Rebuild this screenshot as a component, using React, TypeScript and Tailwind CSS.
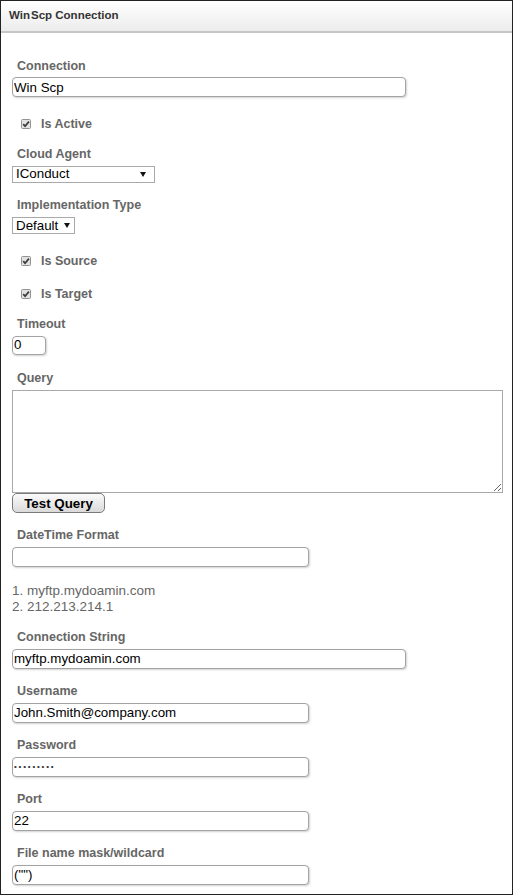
import React from "react";

function Label({ children, className = "" }: { children: React.ReactNode; className?: string }) {
  return (
    <div className={`h-[15px] leading-[15px] ml-[5px] text-[12.5px] font-bold text-[#666] ${className}`}>
      {children}
    </div>
  );
}

function TextInput({ value, width, className = "" }: { value: string; width: string; className?: string }) {
  return (
    <input
      readOnly
      defaultValue={value}
      className={`${width} h-[20px] block rounded-[4px] border border-[#a3a3a3] bg-white pl-[1px] text-[13.33px] text-black shadow-[1px_1px_2px_rgba(0,0,0,0.18)] outline-none font-['Liberation_Sans',Arial,sans-serif] ${className}`}
    />
  );
}

function Check({ label, className = "" }: { label: string; className?: string }) {
  return (
    <div className={`h-[15px] flex items-center ml-[9px] ${className}`}>
      <svg width="10" height="10" viewBox="0 0 10 10" className="shrink-0 mt-[1px]">
        <rect x="0.5" y="0.5" width="9" height="9" rx="1" fill="#e2e2e2" stroke="#939393" />
        <path d="M2.2 5.2 L4.1 7.2 L7.9 2.6" fill="none" stroke="#3a3a3a" strokeWidth="1.7" />
      </svg>
      <span className="ml-[10px] mt-[1px] text-[12.5px] font-bold text-[#666]">{label}</span>
    </div>
  );
}

function Arrow() {
  return (
    <svg width="6" height="5" viewBox="0 0 6 5" className="shrink-0">
      <polygon points="0,0 6,0 3,5" fill="#111" />
    </svg>
  );
}

export default function App() {
  return (
    <div className="w-[513px] h-[895px] border border-[#222] bg-white overflow-hidden font-['Liberation_Sans',Arial,sans-serif]">
      {/* Header */}
      <div className="h-[32px] border-b-2 border-[#c6c6c6] bg-linear-to-b from-white to-[#ececec] flex items-center pl-[8px]">
        <span className="text-[11.5px] font-bold text-[#333]">
          Win<span className="ml-[1px]">Scp</span> Connection
        </span>
      </div>

      {/* Form */}
      <div className="pl-[11px] pt-[25.5px]">
        <Label>Connection</Label>
        <TextInput value="Win Scp" width="w-[394px]" className="mt-[3.5px]" />

        <Check label="Is Active" className="mt-[19px]" />

        <Label className="mt-[15.5px]">Cloud Agent</Label>
        <div className="mt-[4px] w-[143px] h-[17px] border border-[#a9a9a9] bg-white flex items-center justify-between pl-[3px] pr-[8px]">
          <span className="text-[13.33px] text-black leading-none">IConduct</span>
          <Arrow />
        </div>

        <Label className="mt-[15.5px]">Implementation Type</Label>
        <div className="mt-[4px] w-fit h-[17px] border border-[#a9a9a9] bg-white flex items-center gap-[6px] pl-[3px] pr-[4px]">
          <span className="text-[13.33px] text-black leading-none">Default</span>
          <Arrow />
        </div>

        <Check label="Is Source" className="mt-[19px]" />
        <Check label="Is Target" className="mt-[18px]" />

        <Label className="mt-[16px]">Timeout</Label>
        <TextInput value="0" width="w-[34px]" className="mt-[3.5px] !h-[19px]" />

        <Label className="mt-[16.5px]">Query</Label>
        <textarea
          readOnly
          className="mt-[3.5px] block w-[491px] h-[103px] border border-[#a9a9a9] bg-white outline-none resize"
        />
        <button className="block w-[93px] h-[20px] rounded-[5px] border border-[#7a7a7a] bg-linear-to-b from-[#fbfbfb] to-[#dadada] text-[13.33px] font-bold text-black font-['Liberation_Sans',Arial,sans-serif]">
          Test Query
        </button>

        <Label className="mt-[15.5px]">DateTime Format</Label>
        <TextInput value="" width="w-[297px]" className="mt-[3.5px]" />

        <div className="mt-[16.5px] text-[13.5px] leading-[16px] text-[#666]">
          <div>1. myftp.mydoamin.com</div>
          <div>2. 212.213.214.1</div>
        </div>

        <Label className="mt-[15px]">Connection String</Label>
        <TextInput value="myftp.mydoamin.com" width="w-[394px]" className="mt-[3.5px]" />

        <Label className="mt-[15.5px]">Username</Label>
        <TextInput value="John.Smith@company.com" width="w-[297px]" className="mt-[3.5px]" />

        <Label className="mt-[15.5px]">Password</Label>
        <TextInput value="•••••••••" width="w-[297px]" className="mt-[3.5px] !text-[8px] !text-[#333] tracking-[1.8px]" />

        <Label className="mt-[15.5px]">Port</Label>
        <TextInput value="22" width="w-[297px]" className="mt-[3.5px]" />

        <Label className="mt-[15.5px]">File name mask/wildcard</Label>
        <TextInput value={'("")'} width="w-[297px]" className="mt-[3.5px]" />
      </div>
    </div>
  );
}
